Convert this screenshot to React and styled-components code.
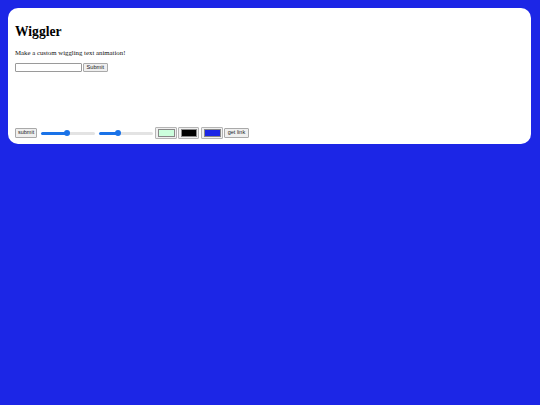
import React, { useState } from "react";
import styled, { createGlobalStyle } from "styled-components";

const Global = createGlobalStyle`
  html, body {
    margin: 0;
    padding: 0;
    background: #1c26e6;
  }
  body {
    padding: 8px 9px 8px 8px;
    min-height: 405px;
    box-sizing: border-box;
    font-family: "Liberation Serif", "Times New Roman", serif;
  }
`;

const Card = styled.main`
  background: #ffffff;
  border-radius: 10px;
  height: 136px;
  box-sizing: border-box;
  padding: 0 7px;
  display: flex;
  flex-direction: column;
`;

const Title = styled.h1`
  margin: 16px 0 0;
  font-size: 13.6px;
  line-height: 16px;
  font-weight: bold;
  color: #000;
`;

const Lead = styled.p`
  margin: 8px 0 0;
  font-size: 6.8px;
  line-height: 9px;
  color: #111;
`;

const Row = styled.div`
  display: flex;
  align-items: center;
  margin-top: ${(p) => p.$top || 0}px;
`;

const TextField = styled.input`
  width: 67px;
  height: 9px;
  box-sizing: border-box;
  margin: 0 1px 0 0;
  padding: 0 2px;
  border: 1px solid #9a9a9a;
  border-radius: 1px;
  font-size: 6px;
  background: #fff;
`;

const Button = styled.button`
  height: ${(p) => p.$h || 9}px;
  box-sizing: border-box;
  margin: 0;
  padding: 0 ${(p) => p.$px || 2.5}px;
  border: 1px solid #a9a9a9;
  border-radius: 1px;
  background: #efefef;
  color: #222;
  font-family: "Liberation Sans", Arial, sans-serif;
  font-size: ${(p) => p.$fs || 5.7}px;
  line-height: 1;
`;

const Slider = styled.input`
  -webkit-appearance: none;
  appearance: none;
  width: 54px;
  height: 3px;
  margin: 0 ${(p) => p.$mr || 2}px 0 ${(p) => p.$ml || 2}px;
  border-radius: 2px;
  outline: none;
  &::-webkit-slider-thumb {
    -webkit-appearance: none;
    width: 6px;
    height: 6px;
    border-radius: 50%;
    background: #1a73e8;
    border: none;
  }
`;

const Swatch = styled.input`
  -webkit-appearance: none;
  appearance: none;
  width: ${(p) => p.$w || 22}px;
  height: 12px;
  box-sizing: border-box;
  margin: 0 ${(p) => p.$mr || 0}px 0 0;
  padding: 1px 1.5px;
  border: 1px solid #b5b5b5;
  border-radius: 1px;
  background: #efefef;
  &::-webkit-color-swatch-wrapper {
    padding: 0;
  }
  &::-webkit-color-swatch {
    border: 1px solid #888;
    border-radius: 0;
  }
`;

function Range({ value, onChange, ml, mr }) {
  const pct = value;
  return (
    <Slider
      type="range"
      min="0"
      max="100"
      value={value}
      $ml={ml}
      $mr={mr}
      onChange={(e) => onChange(Number(e.target.value))}
      style={{
        background: `linear-gradient(to right, #1a73e8 0%, #1a73e8 ${pct}%, #e3e3e3 ${pct}%, #e3e3e3 100%)`,
      }}
    />
  );
}

export default function App() {
  const [speed, setSpeed] = useState(48);
  const [size, setSize] = useState(33);
  const [text, setText] = useState("");
  return (
    <>
      <Global />
      <Card>
        <Title>Wiggler</Title>
        <Lead>Make a custom wiggling text animation!</Lead>
        <Row $top={6}>
          <TextField value={text} onChange={(e) => setText(e.target.value)} />
          <Button>Submit</Button>
        </Row>
        <Row $top={55}>
          <Button $h={10} $px={2} $fs={5.5}>submit</Button>
          <Range value={speed} onChange={setSpeed} ml={4} mr={2} />
          <Range value={size} onChange={setSize} ml={2} mr={2} />
          <Swatch type="color" defaultValue="#ccffdd" $mr={1} />
          <Swatch type="color" defaultValue="#000000" $w={21} $mr={2} />
          <Swatch type="color" defaultValue="#1c26e6" $mr={1} />
          <Button $h={10} $px={2.5} $fs={5.5}>get link</Button>
        </Row>
      </Card>
    </>
  );
}
